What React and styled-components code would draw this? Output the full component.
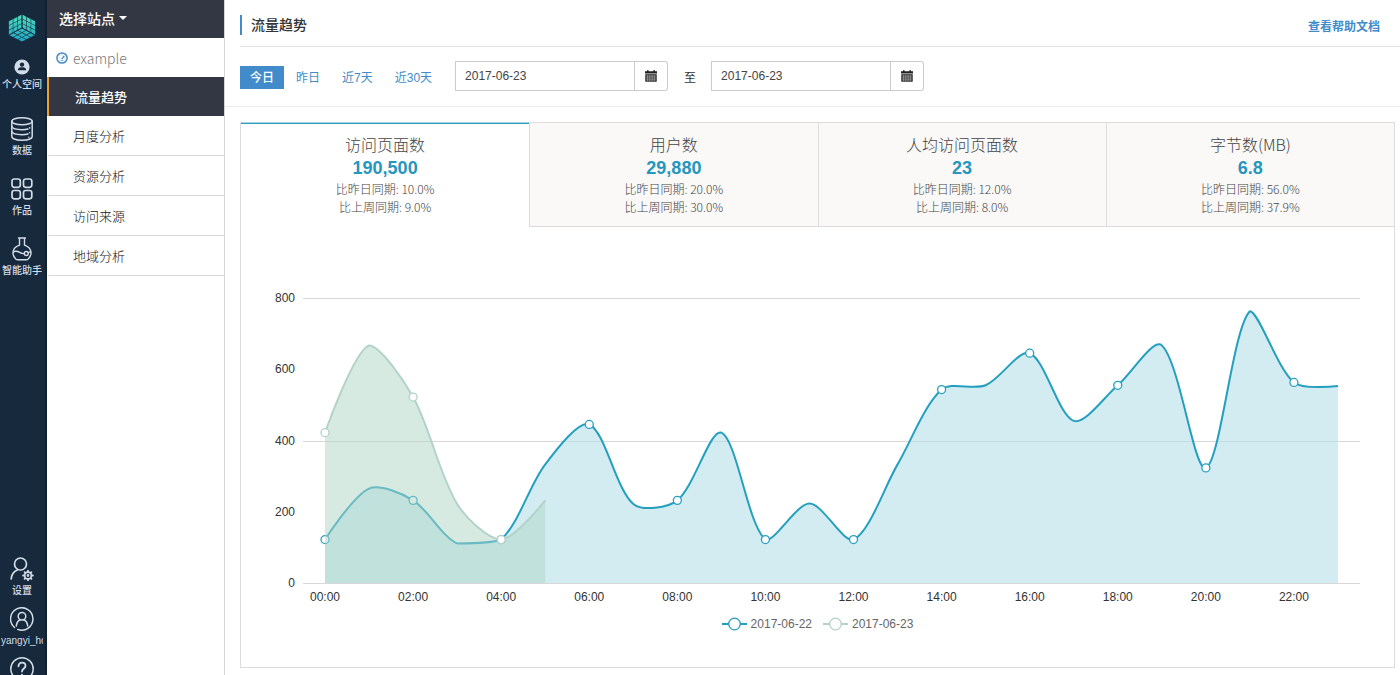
import { useState } from 'react';
import styled, { createGlobalStyle } from 'styled-components';

const GlobalStyle = createGlobalStyle`
  * {
    box-sizing: border-box;
  }
  body {
    margin: 0;
    background: #fff;
    color: #333;
    font-family: 'Liberation Sans', 'Noto Sans CJK SC', sans-serif;
    font-size: 12px;
  }
  button,
  input {
    font-family: inherit;
    font-size: inherit;
  }
  a {
    text-decoration: none;
  }
`;

const Page = styled.div`
  display: flex;
  min-height: 100vh;
`;

/* icon rail */
const Rail = styled.nav`
  position: sticky;
  top: 0;
  flex: none;
  width: 47px;
  height: 100vh;
  padding: 14px 1px 0 0;
  overflow: hidden;
  display: flex;
  flex-direction: column;
  justify-content: space-between;
  background: #17293d;
  border-right: 2px solid #12202f;
`;
const RailGroup = styled.div`
  display: flex;
  flex-direction: column;
  align-items: center;
  gap: 18px;
`;
const TopGroup = styled(RailGroup)`
  gap: 17px;
  padding-bottom: 6px;
`;
const BottomGroup = styled(RailGroup)`
  gap: 8px;
  margin-bottom: -6px;
`;
const RailLink = styled.a`
  width: 100%;
  display: flex;
  flex-direction: column;
  align-items: center;
  gap: 2px;
  color: #d3dde8;
  font-size: 10px;
  line-height: 16px;
  svg {
    display: block;
  }
  &:hover {
    color: #fff;
  }
`;
const RailLabel = styled.span`
  max-width: 42px;
  overflow: hidden;
  white-space: nowrap;
  font-weight: 500;
`;

/* site menu */
const SideMenu = styled.aside`
  flex: none;
  width: 178px;
  border-right: 1px solid #d5d5d5;
`;
const SiteButton = styled.button`
  width: 100%;
  height: 38px;
  padding: 0 12px 2px;
  border: none;
  display: flex;
  align-items: center;
  gap: 4px;
  background: #333744;
  color: #fff;
  font-size: 14px;
  font-weight: 500;
  cursor: pointer;
`;
const Caret = styled.span`
  border: 4px solid transparent;
  border-top-color: #fff;
  border-bottom: none;
`;
const SiteName = styled.div`
  height: 39px;
  padding: 0 9px;
  display: flex;
  align-items: center;
  gap: 5px;
  color: #777;
  font-family: 'Noto Sans CJK SC', sans-serif;
  font-size: 14px;
  font-weight: 300;
`;
const MenuItem = styled.a`
  height: ${(props) => (props.$active ? '39px' : '40px')};
  padding-left: ${(props) => (props.$active ? '26px' : '24px')};
  display: flex;
  align-items: center;
  background: ${(props) => (props.$active ? '#333744' : '#fff')};
  border-left: 2px solid ${(props) => (props.$active ? '#f0a030' : '#fff')};
  border-bottom: ${(props) => (props.$active ? 'none' : '1px solid #d9d9d9')};
  color: ${(props) => (props.$active ? '#fff' : '#111')};
  font-size: 13px;
  font-weight: ${(props) => (props.$active ? 500 : 300)};
`;

/* main column */
const Main = styled.main`
  flex: 1;
  min-width: 0;
`;
const Header = styled.header`
  height: 47px;
  margin-left: 15px;
  padding: 4px 20px 0 0;
  display: flex;
  align-items: center;
  justify-content: space-between;
  border-bottom: 1px solid #e2e2e2;
`;
const Title = styled.h1`
  margin: 0;
  padding-left: 9px;
  border-left: 2px solid #428bca;
  font-size: 14px;
  font-weight: 500;
  line-height: 20px;
`;
const HelpLink = styled.a`
  color: #428bca;
  font-weight: 700;
`;
const Toolbar = styled.div`
  height: 60px;
  padding: 0 0 1px 15px;
  display: flex;
  align-items: center;
  border-bottom: 1px solid #ebebeb;
`;
const Ranges = styled.div`
  display: flex;
  gap: 2px;
  margin-right: 13px;
  padding-top: 2px;
`;
const RangeButton = styled.button`
  height: 23px;
  padding: 0 10px 1px;
  border: none;
  background: ${(props) => (props.$active ? '#428bca' : 'transparent')};
  color: ${(props) => (props.$active ? '#fff' : '#428bca')};
  font-weight: ${(props) => (props.$active ? 500 : 400)};
  cursor: pointer;
`;
const DateGroup = styled.div`
  display: flex;
  width: 213px;
  height: 30px;
`;
const DateInput = styled.input`
  flex: 1;
  min-width: 0;
  padding: 0 9px;
  border: 1px solid #ccc;
  color: #444;
`;
const DateButton = styled.button`
  width: 33px;
  padding: 0;
  border: 1px solid #ccc;
  border-left: none;
  border-radius: 0 3px 3px 0;
  display: flex;
  align-items: center;
  justify-content: center;
  background: #fff;
  color: #222;
  cursor: pointer;
`;
const Until = styled.span`
  margin: 0 15px 0 16px;
`;

/* panel */
const Panel = styled.section`
  margin: 15px 5px 7px 15px;
  padding-bottom: 30px;
  border: 1px solid #dcdcdc;
`;
const Tabs = styled.div`
  display: grid;
  grid-template-columns: repeat(4, 1fr);
`;
const Tab = styled.button`
  height: 104px;
  padding: 9px 0 0;
  border: none;
  border-bottom: 1px solid ${(props) => (props.$active ? '#fff' : '#dcdcdc')};
  display: flex;
  flex-direction: column;
  align-items: center;
  background: ${(props) => (props.$active ? '#fff' : '#faf9f8')};
  box-shadow: ${(props) =>
    props.$active ? '0 -1px 0 #a5d2e2, inset 0 1px 0 #2f9fc4' : 'none'};
  color: #444;
  font-family: 'Noto Sans CJK SC', sans-serif;
  cursor: pointer;
  & + & {
    border-left: 1px solid #dcdcdc;
  }
`;
const TabTitle = styled.span`
  font-size: 16px;
  font-weight: 300;
  line-height: 24px;
`;
const TabValue = styled.strong`
  color: #2596be;
  font-family: 'Liberation Sans', sans-serif;
  font-size: 18px;
  font-weight: 700;
  line-height: 24px;
`;
const TabNote = styled.span`
  font-weight: 300;
  line-height: 18px;
`;
const ChartSvg = styled.svg`
  display: block;
  width: 100%;
  height: auto;
  text {
    fill: #333;
    font-size: 12px;
  }
`;
const Legend = styled.div`
  display: flex;
  justify-content: center;
  gap: 11px;
`;
const LegendItem = styled.button`
  height: 26px;
  padding: 0;
  border: none;
  display: flex;
  align-items: center;
  gap: 4px;
  background: none;
  color: #666;
  cursor: pointer;
`;

const CUBE_R = 13.8;
const UP = [0, -CUBE_R / 3];
const LEFT = [-13.4 / 3, CUBE_R / 6];
const RIGHT = [13.4 / 3, CUBE_R / 6];

const cell = (a, b, i, j) => {
  const s = 0.06;
  return [
    [i + s, j + s],
    [i + 1 - s, j + s],
    [i + 1 - s, j + 1 - s],
    [i + s, j + 1 - s],
  ]
    .map(([m, n]) => `${14 + a[0] * m + b[0] * n},${14 + a[1] * m + b[1] * n}`)
    .join(' ');
};

const Logo = () => (
  <svg width="28" height="28" viewBox="0 0 28 28">
    <defs>
      <linearGradient id="cube" gradientUnits="userSpaceOnUse" x1="0" y1="0" x2="0" y2="28">
        <stop offset="0" stopColor="#4fdcb8" />
        <stop offset="1" stopColor="#1fa6c6" />
      </linearGradient>
    </defs>
    {[
      [UP, LEFT],
      [UP, RIGHT],
      [LEFT, RIGHT],
    ].map(([a, b], face) =>
      [0, 1, 2].map((i) =>
        [0, 1, 2].map((j) => (
          <polygon key={`${face}${i}${j}`} points={cell(a, b, i, j)} fill="url(#cube)" />
        ))
      )
    )}
    <path d="M14 14V0M14 14L2 20.500M14 14l12 6.500" stroke="#17293d" strokeWidth="1" />
  </svg>
);

const Icon = ({ width = 1.6, children }) => (
  <svg
    width="24"
    height="24"
    viewBox="0 0 24 24"
    fill="none"
    stroke="currentColor"
    strokeWidth={width}
    strokeLinecap="round"
    strokeLinejoin="round"
  >
    {children}
  </svg>
);

const SpaceIcon = () => (
  <svg width="16" height="16" viewBox="0 0 16 16">
    <circle cx="8" cy="8" r="7.6" fill="#d3dde8" />
    <circle cx="8" cy="5.6" r="2.2" fill="#17293d" />
    <path d="M3.8 11.2c0-2 1.6-2.7 3.2-3h2c1.6.3 3.2 1 3.2 3z" fill="#17293d" />
  </svg>
);
const DataIcon = () => (
  <Icon width={1.5}>
    <ellipse cx="12" cy="4.3" rx="10.2" ry="3.5" />
    <path d="M1.8 4.3v15.2c0 2.2 4.5 3.7 10.2 3.7s10.2-1.5 10.2-3.7V4.3" />
    <path d="M1.8 9.4c.6 2 4.9 3.3 10.2 3.3 2.4 0 4.4-.2 6-.7M1.8 14.4c.6 2 4.9 3.3 10.2 3.3 2.4 0 4.4-.2 6-.7" />
    <path d="M19.6 10.8v.1M19.6 15.7v.1M18.8 20.2v.1" />
  </Icon>
);
const WorksIcon = () => (
  <Icon width={1.7}>
    <rect x="2" y="2" width="8.3" height="8.3" rx="2.2" />
    <rect x="13.5" y="2" width="8.3" height="8.3" rx="2.2" />
    <rect x="2" y="13.5" width="8.3" height="8.3" rx="2.2" />
    <rect x="13.5" y="13.5" width="8.3" height="8.3" rx="2.2" />
  </Icon>
);
const FlaskIcon = () => (
  <Icon width={1.4}>
    <path d="M8.5 1h7M9.500 1v7.2C5.500 9.600 3 12.600 3 16c0 2.500 1.300 4.600 3 6.200.6.5 1.100.6 1.800.6h8.400c.7 0 1.200-.1 1.800-.6 1.700-1.600 3-3.700 3-6.200 0-3.400-2.500-6.400-6.500-7.800V1" />
    <path d="M3.200 15c2.500-1.400 4.600-.7 6.500.4 1.600 1 3 1.500 4.500 1.100M18.400 15.500c.8-.5 1.600-.7 2.400-.6" />
    <circle cx="16.3" cy="16.5" r="2" />
  </Icon>
);
const SettingIcon = () => (
  <Icon width={1.7}>
    <circle cx="10.5" cy="7" r="6" />
    <path d="M1.2 22c.3-4.300 2.600-7.500 6.200-9" />
    <circle cx="18" cy="18.5" r="3.4" />
    <circle cx="18" cy="18.5" r=".8" strokeWidth="1.2" />
    <path
      d="M18 13.600v1M18 22.400v1M13.100 18.500h1M21.900 18.500h1M14.600 15.100l.6.6M20.800 21.300l.6.6M14.600 21.900l.6-.6M20.800 15.700l.6-.6"
      strokeWidth="1.8"
    />
  </Icon>
);
const UserIcon = () => (
  <Icon width={1.5}>
    <path d="M4.5 20.5a11.200 11.200 0 1 1 3.200 1.900" />
    <circle cx="12" cy="9.2" r="3.8" />
    <path d="M6.3 19c.3-3 1.700-5.200 4-6.200M17.700 19c-.3-3-1.700-5.200-4-6.200" />
  </Icon>
);
const HelpIcon = () => (
  <Icon width={1.5}>
    <circle cx="12" cy="12" r="11.2" />
    <path
      d="M8.5 9.3c0-2.200 1.500-3.600 3.500-3.600s3.500 1.300 3.500 3.200c0 2.500-3.500 2.700-3.500 5.600"
      strokeWidth="1.8"
    />
    <path d="M12 17.8v.3" strokeWidth="2" />
  </Icon>
);
const GaugeIcon = () => (
  <svg width="12" height="12" viewBox="0 0 12 12" fill="none" stroke="#428bca">
    <circle cx="6" cy="6" r="5.1" strokeWidth="1.5" />
    <path d="M5.6 7L8.300 4" strokeWidth="1.2" />
    <path d="M2.8 6h.8M3.800 3.600l.5.5M6 2.600v.8M8.500 6.200h.8M4.500 8.600h3" strokeWidth=".7" />
  </svg>
);
const CalendarIcon = () => (
  <svg width="12" height="12" viewBox="0 0 12 12">
    <path d="M0 1.300h2V.2h1.600v1.100h4.800V.2H10v1.100h2v2.200H0z" fill="currentColor" />
    <path d="M.3 4.200h11.400v7.500H.3z" fill="currentColor" />
    <path
      d="M1 6.100h10M1 8h10M1 9.900h10M2.700 4.800v6.200M4.900 4.800v6.200M7.100 4.800v6.200M9.300 4.800v6.200"
      stroke="#fff"
      strokeWidth=".4"
    />
  </svg>
);

const menu = ['流量趋势', '月度分析', '资源分析', '访问来源', '地域分析'];
const ranges = ['今日', '昨日', '近7天', '近30天'];
const stats = [
  { title: '访问页面数', value: '190,500', day: '10.0%', week: '9.0%' },
  { title: '用户数', value: '29,880', day: '20.0%', week: '30.0%' },
  { title: '人均访问页面数', value: '23', day: '12.0%', week: '8.0%' },
  { title: '字节数(MB)', value: '6.8', day: '56.0%', week: '37.9%' },
];
const series = [
  {
    name: '2017-06-22',
    line: '#259fbf',
    fill: '#b4dfe9',
    opacity: 0.6,
    data: [
      122, 265, 232, 111, 122, 333, 445, 222, 232, 422, 122, 223, 122, 333, 543,
      555, 645, 455, 555, 667, 323, 763, 563, 553,
    ],
  },
  {
    name: '2017-06-23',
    line: '#b3d2c8',
    fill: '#aed5c5',
    opacity: 0.5,
    data: [422, 667, 522, 222, 122, 232],
  },
];

const CHART = { width: 1153, height: 384, left: 62, right: 1119, top: 71, bottom: 356 };
const STEP = (CHART.right - CHART.left) / 24;
const xOf = (i) => CHART.left + STEP * (i + 0.5);
const yOf = (v) => CHART.bottom - ((CHART.bottom - CHART.top) * v) / 800;
const clamp = (v, a, b) => Math.min(Math.max(v, Math.min(a, b)), Math.max(a, b));

// Bezier through all points, control points kept inside the data's own range
const smoothPath = (data, smooth = 0.3) => {
  const pts = data.map((v, i) => [xOf(i), yOf(v)]);
  const low = yOf(Math.min(...data));
  const high = yOf(Math.max(...data));
  let d = `M${pts[0]}`;
  let out = pts[0];
  for (let i = 1; i < pts.length; i++) {
    const p = pts[i];
    const prev = pts[i - 1];
    const next = pts[i + 1];
    let into = p;
    let nextOut = p;
    if (next) {
      const a = Math.hypot(p[0] - prev[0], p[1] - prev[1]);
      const b = Math.hypot(p[0] - next[0], p[1] - next[1]);
      const ratio = b / (a + b);
      const v = [next[0] - prev[0], next[1] - prev[1]];
      into = [
        p[0] - v[0] * smooth * (1 - ratio),
        clamp(p[1] - v[1] * smooth * (1 - ratio), low, high),
      ];
      nextOut = [
        p[0] + v[0] * smooth * ratio,
        clamp(p[1] + v[1] * smooth * ratio, low, high),
      ];
    }
    d += `C${out} ${into} ${p}`;
    out = nextOut;
  }
  return d;
};

const Chart = ({ hidden }) => (
  <ChartSvg viewBox={`0 0 ${CHART.width} ${CHART.height}`}>
    {[0, 200, 400, 600, 800].map((v) => (
      <text key={v} x={CHART.left - 8} y={yOf(v) + 4} textAnchor="end">
        {v}
      </text>
    ))}
    {[0, 400, 800].map((v) => (
      <line
        key={v}
        x1={CHART.left}
        x2={CHART.right}
        y1={Math.round(yOf(v)) + 0.5}
        y2={Math.round(yOf(v)) + 0.5}
        stroke="#d8d8d8"
      />
    ))}
    {Array.from({ length: 12 }, (_, i) => (
      <text key={i} x={xOf(i * 2)} y={CHART.bottom + 18} textAnchor="middle">
        {`${String(i * 2).padStart(2, '0')}:00`}
      </text>
    ))}
    {series
      .filter((s) => !hidden.includes(s.name))
      .map((s) => {
        const d = smoothPath(s.data);
        return (
          <g key={s.name}>
            <path
              d={`${d}L${xOf(s.data.length - 1)} ${CHART.bottom}L${xOf(0)} ${CHART.bottom}Z`}
              fill={s.fill}
              fillOpacity={s.opacity}
            />
            <path d={d} fill="none" stroke={s.line} strokeWidth="2" />
            {s.data.map((v, i) =>
              i % 2 === 0 ? (
                <circle
                  key={i}
                  cx={xOf(i)}
                  cy={yOf(v)}
                  r="4"
                  fill="#fff"
                  stroke={s.line}
                  strokeWidth="1.3"
                />
              ) : null
            )}
          </g>
        );
      })}
  </ChartSvg>
);

const App = () => {
  const [range, setRange] = useState('今日');
  const [tab, setTab] = useState(0);
  const [hidden, setHidden] = useState([]);
  const [from, setFrom] = useState('2017-06-23');
  const [to, setTo] = useState('2017-06-23');

  const toggle = (name) =>
    setHidden(hidden.includes(name) ? hidden.filter((n) => n !== name) : [...hidden, name]);

  return (
    <Page>
      <GlobalStyle />
      <Rail>
        <RailGroup>
          <TopGroup>
            <Logo />
            <RailLink href="#space">
              <SpaceIcon />
              <RailLabel>个人空间</RailLabel>
            </RailLink>
          </TopGroup>
          <RailLink href="#data">
            <DataIcon />
            <RailLabel>数据</RailLabel>
          </RailLink>
          <RailLink href="#works">
            <WorksIcon />
            <RailLabel>作品</RailLabel>
          </RailLink>
          <RailLink href="#assistant">
            <FlaskIcon />
            <RailLabel>智能助手</RailLabel>
          </RailLink>
        </RailGroup>
        <BottomGroup>
          <RailLink href="#settings">
            <SettingIcon />
            <RailLabel>设置</RailLabel>
          </RailLink>
          <RailLink href="#user">
            <UserIcon />
            <RailLabel>yangyi_ho</RailLabel>
          </RailLink>
          <RailLink href="#help" aria-label="帮助">
            <HelpIcon />
          </RailLink>
        </BottomGroup>
      </Rail>

      <SideMenu>
        <SiteButton>
          选择站点
          <Caret />
        </SiteButton>
        <SiteName>
          <GaugeIcon />
          example
        </SiteName>
        {menu.map((item, i) => (
          <MenuItem key={item} href={`#menu-${i}`} $active={i === 0}>
            {item}
          </MenuItem>
        ))}
      </SideMenu>

      <Main>
        <Header>
          <Title>流量趋势</Title>
          <HelpLink href="#docs">查看帮助文档</HelpLink>
        </Header>
        <Toolbar>
          <Ranges>
            {ranges.map((r) => (
              <RangeButton key={r} $active={r === range} onClick={() => setRange(r)}>
                {r}
              </RangeButton>
            ))}
          </Ranges>
          <DateGroup>
            <DateInput
              aria-label="开始日期"
              value={from}
              onChange={(e) => setFrom(e.target.value)}
            />
            <DateButton aria-label="选择开始日期">
              <CalendarIcon />
            </DateButton>
          </DateGroup>
          <Until>至</Until>
          <DateGroup>
            <DateInput
              aria-label="结束日期"
              value={to}
              onChange={(e) => setTo(e.target.value)}
            />
            <DateButton aria-label="选择结束日期">
              <CalendarIcon />
            </DateButton>
          </DateGroup>
        </Toolbar>

        <Panel>
          <Tabs>
            {stats.map((s, i) => (
              <Tab key={s.title} $active={i === tab} onClick={() => setTab(i)}>
                <TabTitle>{s.title}</TabTitle>
                <TabValue>{s.value}</TabValue>
                <TabNote>比昨日同期: {s.day}</TabNote>
                <TabNote>比上周同期: {s.week}</TabNote>
              </Tab>
            ))}
          </Tabs>
          <Chart hidden={hidden} />
          <Legend>
            {series.map((s) => (
              <LegendItem key={s.name} onClick={() => toggle(s.name)}>
                <svg width="25" height="14" viewBox="0 0 25 14">
                  <path d="M0 7h25" stroke={s.line} strokeWidth="2" />
                  <circle cx="12.5" cy="7" r="5.8" fill="#fff" stroke={s.line} strokeWidth="1.3" />
                </svg>
                {s.name}
              </LegendItem>
            ))}
          </Legend>
        </Panel>
      </Main>
    </Page>
  );
};

export default App;
